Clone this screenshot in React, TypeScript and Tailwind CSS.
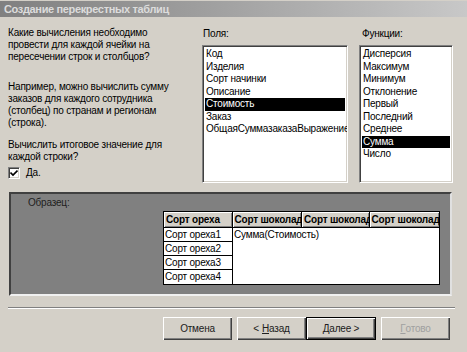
import React from 'react';

const fields = ['Код', 'Изделия', 'Сорт начинки', 'Описание', 'Стоимость', 'Заказ', 'ОбщаяСуммазаказаВыражение'];
const funcs = ['Дисперсия', 'Максимум', 'Минимум', 'Отклонение', 'Первый', 'Последний', 'Среднее', 'Сумма', 'Число'];

const ListBox = ({ items, selected, width }: { items: string[]; selected: string; width: string }) => (
  <div
    className={`${width} h-[138px] bg-white border border-t-[#808080] border-l-[#808080] border-b-white border-r-white shadow-[inset_1px_1px_0_#404040,inset_-1px_-1px_0_#d4d0c8] p-[2px] overflow-hidden`}
  >
    {items.map((it) => (
      <div
        key={it}
        className={`h-[12.5px] leading-[12.5px] pl-[1px] whitespace-nowrap ${it === selected ? 'bg-black text-white' : 'text-black'}`}
      >
        {it}
      </div>
    ))}
  </div>
);

const Button = ({ children, isDefault, disabled }: { children: React.ReactNode; isDefault?: boolean; disabled?: boolean }) => (
  <div
    className={`h-[23px] flex items-center justify-center bg-[#d4d0c8] ${
      isDefault
        ? 'w-[70px] border border-black shadow-[inset_1px_1px_0_#fff,inset_-1px_-1px_0_#404040,inset_-2px_-2px_0_#808080]'
        : 'w-[69px] shadow-[inset_1px_1px_0_#fff,inset_-1px_-1px_0_#404040,inset_-2px_-2px_0_#808080]'
    } ${disabled ? 'text-[#a0a0a0]' : 'text-[#202020]'}`}
  >
    {children}
  </div>
);

export default function App() {
  return (
    <div
      className="w-[467px] h-[352px] bg-[#d4d0c8] overflow-hidden flex flex-col text-[10px] tracking-[-0.2px] text-black"
      style={{ fontFamily: '"Liberation Sans", Arial, sans-serif' }}
    >
      <div className="h-[17px] shrink-0 bg-gradient-to-r from-[#808080] to-[#c8c8c8] flex items-center pl-[4px] text-[11px] tracking-[-0.35px] font-bold text-[#dcdcdc] border-t border-[#d4d0c8]">
        Создание перекрестных таблиц
      </div>

      <div className="h-[175px] shrink-0 flex">
        <div className="w-[202px] pl-[8px] pt-[10px] leading-[12px]">
          <p>
            Какие вычисления необходимо
            <br />
            провести для каждой ячейки на
            <br />
            пересечении строк и столбцов?
          </p>
          <p className="mt-[18px]">
            Например, можно вычислить сумму
            <br />
            заказов для каждого сотрудника
            <br />
            (столбец) по странам и регионам
            <br />
            (строка).
          </p>
          <p className="mt-[10px]">
            Вычислить итоговое значение для
            <br />
            каждой строки?
          </p>
          <div className="mt-[4px] flex items-center gap-[6px]">
            <div className="w-[12px] h-[12px] bg-white border border-t-[#808080] border-l-[#808080] border-b-white border-r-white shadow-[inset_1px_1px_0_#404040,inset_-1px_-1px_0_#d4d0c8] flex items-center justify-center">
              <svg width="8" height="8" viewBox="0 0 8 8">
                <path d="M0.5 3.5 L3 6 L7.5 1.5" stroke="#000" strokeWidth="1.6" fill="none" />
              </svg>
            </div>
            <span>Да.</span>
          </div>
        </div>

        <div className="w-[157px] pt-[11px]">
          <div className="h-[12px] leading-[12px] pl-[1px]">Поля:</div>
          <div className="mt-[5px]">
            <ListBox items={fields} selected="Стоимость" width="w-[146px]" />
          </div>
        </div>

        <div className="pt-[11px]">
          <div className="h-[12px] leading-[12px] pl-[3px]">Функции:</div>
          <div className="mt-[5px]">
            <ListBox items={funcs} selected="Сумма" width="w-[94px]" />
          </div>
        </div>
      </div>

      <div className="ml-[9px] w-[443px] h-[104px] shrink-0 bg-[#808080] border-2 border-t-[#404040] border-l-[#404040] border-b-[#f0f0f0] border-r-[#e0e0e0] pt-[3px]">
        <div className="pl-[17px] leading-[12px] text-[#202020]">Образец:</div>
        <div className="ml-[152px] mt-[2px] w-[277px] border border-black bg-white">
          <div className="flex h-[16px] bg-[#d4d0c8] font-bold border-b border-black">
            {['Сорт ореха', 'Сорт шоколада', 'Сорт шоколада', 'Сорт шоколада'].map((h, i) => (
              <div
                key={i}
                className={`${i === 0 ? 'w-[69px]' : i === 2 ? 'w-[68px]' : 'w-[70px]'} overflow-hidden whitespace-nowrap pl-[2px] leading-[15px] shadow-[inset_1px_1px_0_#fff,inset_-1px_-1px_0_#808080] ${i < 3 ? 'border-r border-black' : ''}`}
              >
                {h}
              </div>
            ))}
          </div>
          <div className="flex">
            <div className="w-[69px] border-r border-black">
              {['Сорт ореха1', 'Сорт ореха2', 'Сорт ореха3', 'Сорт ореха4'].map((r, i) => (
                <div key={r} className={`h-[14px] leading-[13px] pl-[1px] ${i < 3 ? 'border-b border-black' : ''}`}>
                  {r}
                </div>
              ))}
            </div>
            <div className="flex-1 pl-[1px] leading-[13px]">Сумма(Стоимость)</div>
          </div>
        </div>
      </div>

      <div className="ml-[8px] w-[447px] mt-[11px] h-[2px] border-t border-[#808080] border-b border-b-white shrink-0" />

      <div className="mt-[8px] flex pl-[163px]">
        <Button>Отмена</Button>
        <div className="ml-[5px]">
          <Button>
            &lt; <span className="underline ml-[3px]">Н</span>азад
          </Button>
        </div>
        <Button isDefault>
          <span className="underline">Д</span>алее &gt;
        </Button>
        <div className="ml-[5px]">
          <Button disabled>
            <span className="underline">Г</span>отово
          </Button>
        </div>
      </div>
    </div>
  );
}
